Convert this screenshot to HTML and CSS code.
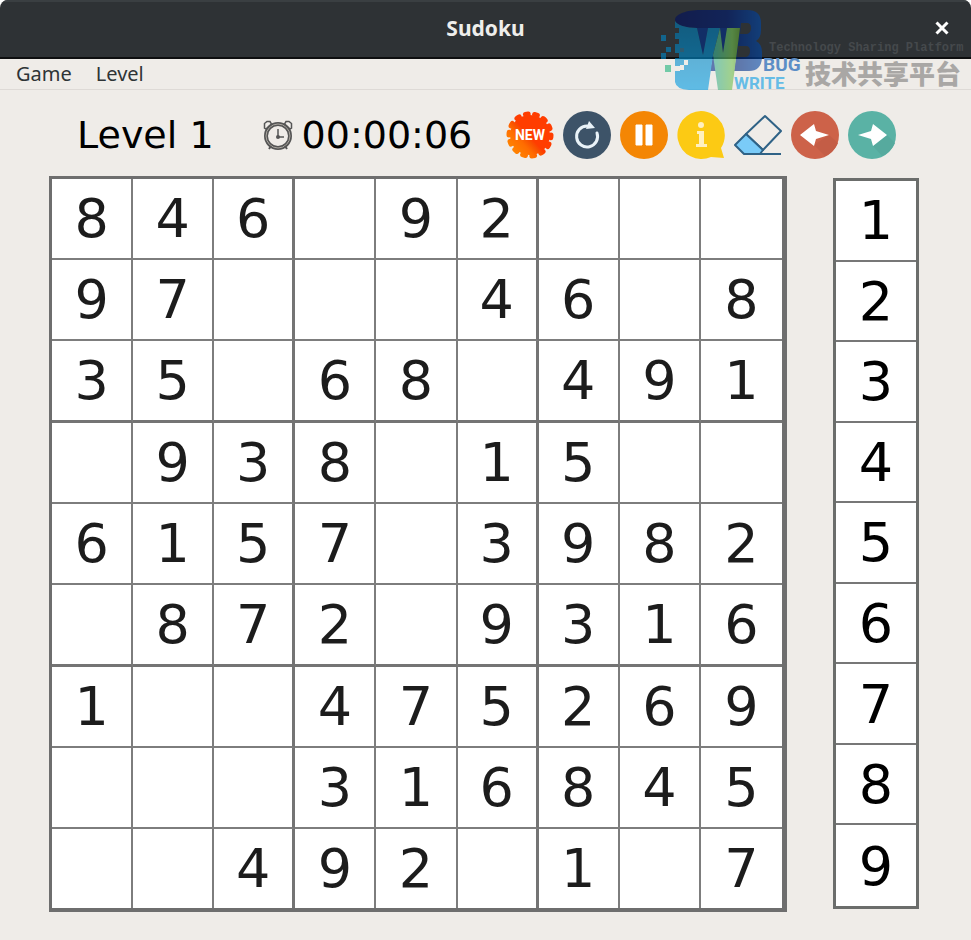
FILE: index.html
```html
<!DOCTYPE html>
<html lang="en">
<head>
    <meta charset="UTF-8">
    <meta name="viewport" content="width=device-width, initial-scale=1.0">
    <title>Sudoku</title>
    <link rel="stylesheet" href="styles.css">
</head>
<body>
    <div class="window">
        <header class="titlebar">
            <h1>Sudoku</h1>
            <button type="button" class="close-btn" aria-label="Close">
                <svg width="14" height="14" viewBox="0 0 14 14"><path d="M1.500 1.500L12.500 12.500M12.500 1.500L1.500 12.500" stroke="#fff" stroke-width="3"/></svg>
            </button>
        </header>

        <nav class="menubar">
            <button type="button">Game</button>
            <button type="button">Level</button>
        </nav>

        <div class="toolbar">
            <span class="level">Level 1</span>
            <svg class="clock" width="30" height="30" viewBox="0 0 30 30" fill="none" stroke="#555">
                <circle cx="15" cy="16" r="12" stroke-width="4"/>
                <circle cx="15" cy="16" r="12" stroke="#aaa69f" stroke-width="1"/>
                <path d="M1.500 8V3.500L4 1.500H7L8.500 4L3 9ZM28.500 8V3.500L26 1.500H23L21.500 4L27 9Z" stroke-width="1.500"/>
                <path d="M8 26L6 29M22 26L24 29" stroke-width="2"/>
                <path d="M15 9V17H21" stroke-width="1.500"/>
                <circle cx="15" cy="17" r="2" fill="#555" stroke="none"/>
            </svg>
            <time class="timer">00:00:06</time>

            <div class="tools">
                <button type="button" aria-label="New game">
                    <svg width="48" height="48" viewBox="0 0 48 48">
                        <defs>
                            <linearGradient id="badge" gradientUnits="userSpaceOnUse" x1="4" y1="42" x2="44" y2="6">
                                <stop offset="0" stop-color="#ff8a00"/>
                                <stop offset="0.300" stop-color="#ff6c00"/>
                                <stop offset="0.420" stop-color="#f95000"/>
                                <stop offset="0.480" stop-color="#ff3d00"/>
                            </linearGradient>
                        </defs>
                        <circle cx="24" cy="24" r="20" fill="url(#badge)"/>
                        <circle cx="24" cy="24" r="21" fill="none" stroke="url(#badge)" stroke-width="5" stroke-linecap="round" pathLength="140" stroke-dasharray="3 7"/>
                        <text class="badge-text" x="24" y="29" text-anchor="middle">NEW</text>
                    </svg>
                </button>
                <button type="button" aria-label="Restart">
                    <svg width="48" height="48" viewBox="0 0 48 48">
                        <circle cx="24" cy="24" r="24" fill="#3d5368"/>
                        <path d="M24 15A10.500 10.500 0 1 0 34 22" fill="none" stroke="#e9f2f8" stroke-width="3" stroke-linecap="round"/>
                        <path d="M26 10L32 17L23 18Z" fill="#e9f2f8"/>
                    </svg>
                </button>
                <button type="button" aria-label="Pause">
                    <svg width="48" height="48" viewBox="0 0 48 48">
                        <circle cx="24" cy="24" r="24" fill="#f48604"/>
                        <path d="M16 14H22V34H16ZM26 14H32V34H26Z" fill="#fff" stroke="#fff" stroke-width="1" stroke-linejoin="round"/>
                    </svg>
                </button>
                <button type="button" aria-label="Hint">
                    <svg width="48" height="48" viewBox="0 0 48 48">
                        <path d="M24 0A24 24 0 1 0 34 46L47 47L44 37A24 24 0 0 0 24 0Z" fill="#fcca14"/>
                        <circle cx="24" cy="14" r="3" fill="#fff0c0"/>
                        <path d="M20 20H27V33H30V36H19V33H22V23H20Z" fill="#fff0c0"/>
                    </svg>
                </button>
                <button type="button" aria-label="Erase">
                    <svg width="48" height="48" viewBox="0 0 48 48" stroke="#2f6286" stroke-width="2" stroke-linejoin="round">
                        <path d="M31 5L47 20L29 39L12 23Z" fill="#efece8"/>
                        <path d="M12 23L29 39L26 43H10L1 34Z" fill="#7acbf8"/>
                        <path d="M10 43H47" fill="none"/>
                    </svg>
                </button>
                <button type="button" aria-label="Undo">
                    <svg width="48" height="48" viewBox="0 0 48 48">
                        <circle cx="24" cy="24" r="24" fill="#cd6249"/>
                        <path d="M23 34L34 45A24 24 0 0 0 47 32L38 24Z" fill="#c45d46"/>
                        <path d="M9 24L23 13L25 20L38 24L25 28L23 35Z" fill="#fff"/>
                    </svg>
                </button>
                <button type="button" aria-label="Redo">
                    <svg width="48" height="48" viewBox="0 0 48 48">
                        <circle cx="24" cy="24" r="24" fill="#5ab2a5"/>
                        <path d="M25 35L34 45A24 24 0 0 0 47 32L39 24Z" fill="#56aa9e"/>
                        <path d="M39 24L25 13L23 20L10 24L23 28L25 35Z" fill="#fff"/>
                    </svg>
                </button>
            </div>
        </div>

        <main class="game">
            <table class="board" aria-label="Sudoku board">
                <tbody>
                    <tr><td>8</td><td>4</td><td>6</td><td></td><td>9</td><td>2</td><td></td><td></td><td></td></tr>
                    <tr><td>9</td><td>7</td><td></td><td></td><td></td><td>4</td><td>6</td><td></td><td>8</td></tr>
                    <tr><td>3</td><td>5</td><td></td><td>6</td><td>8</td><td></td><td>4</td><td>9</td><td>1</td></tr>
                    <tr><td></td><td>9</td><td>3</td><td>8</td><td></td><td>1</td><td>5</td><td></td><td></td></tr>
                    <tr><td>6</td><td>1</td><td>5</td><td>7</td><td></td><td>3</td><td>9</td><td>8</td><td>2</td></tr>
                    <tr><td></td><td>8</td><td>7</td><td>2</td><td></td><td>9</td><td>3</td><td>1</td><td>6</td></tr>
                    <tr><td>1</td><td></td><td></td><td>4</td><td>7</td><td>5</td><td>2</td><td>6</td><td>9</td></tr>
                    <tr><td></td><td></td><td></td><td>3</td><td>1</td><td>6</td><td>8</td><td>4</td><td>5</td></tr>
                    <tr><td></td><td></td><td>4</td><td>9</td><td>2</td><td></td><td>1</td><td></td><td>7</td></tr>
                </tbody>
            </table>

            <div class="numpad">
                <button type="button">1</button>
                <button type="button">2</button>
                <button type="button">3</button>
                <button type="button">4</button>
                <button type="button">5</button>
                <button type="button">6</button>
                <button type="button">7</button>
                <button type="button">8</button>
                <button type="button">9</button>
            </div>
        </main>

        <!-- logo laid over the top right corner -->
        <svg class="watermark" width="316" height="90" viewBox="0 0 316 90">
            <defs>
                <linearGradient id="blue" x1="0" y1="0" x2="1" y2="0">
                    <stop offset="0" stop-color="#000f5c"/>
                    <stop offset="0.600" stop-color="#001c70"/>
                    <stop offset="1" stop-color="#0048a8"/>
                </linearGradient>
                <linearGradient id="teal" x1="0" y1="0" x2="0" y2="1">
                    <stop offset="0" stop-color="#0078b0"/>
                    <stop offset="1" stop-color="#009ce4"/>
                </linearGradient>
                <linearGradient id="green" x1="0" y1="0" x2="1" y2="0">
                    <stop offset="0" stop-color="#38b09c"/>
                    <stop offset="0.700" stop-color="#70c050"/>
                    <stop offset="1" stop-color="#5c9e30"/>
                </linearGradient>
            </defs>
            <g opacity="0.600">
                <path fill="url(#blue)" fill-rule="evenodd" d="M20 15C20 9 32 5 45 5H92Q106 5 106 18V25Q106 33 101 36Q107 39 107 47V53Q106 66 94 66H79L85 23H72L68 48L65 23L58 50L60 66L56 66L58 50L65 23H53L48 50L42 23C30 23 20 20 20 15ZM86 18H92Q96 18 96 23T92 29H85ZM83 41H91Q95 41 95 46T91 52H82Z"/>
                <path fill="#002c88" d="M42 23H53L48 50ZM65 23H72L68 48ZM58 50L63 66H55Z"/>
                <path fill="url(#teal)" d="M20 16C22 20 31 23 42 23L48 50L53 23H65L58 50L53 85H34Q21 84 20 77V66H25V61H20V53H24V48H20V39H24V34H20V28H24V23H20Z"/>
                <path fill="url(#green)" d="M65 23L68 48L72 23H85L77 85H63L58 50Z"/>
                <path fill="#0088c8" d="M6 30H11V36H6ZM6 48H11V54H6ZM11 42H16V47H11Z"/>
                <path fill="#20b47c" d="M10 60H16V67H10Z"/>
            </g>
            <path fill="#efece8" d="M29 55H33V60H29ZM25 60H29V65H25Z"/>
            <path fill="#2e5a70" d="M25 43H29V47H25Z"/>
            <text class="mark-bug" x="108" y="66">BUG</text>
            <text class="mark-write" x="79" y="84">WRITE</text>
            <text class="mark-tagline" x="114" y="46">Technology Sharing Platform</text>
            <text class="mark-cjk" x="150" y="79">技术共享平台</text>
        </svg>
    </div>
</body>
</html>
```

FILE: styles.css
```css
body {
    margin: 0;
    background-color: #fff;
    font-family: "Noto Sans", sans-serif;
    color: #2e3436;
}
button {
    padding: 0;
    border: none;
    background: none;
    color: inherit;
    font: inherit;
    cursor: pointer;
}
svg {
    display: block;
}
.window {
    position: relative;
    min-height: 100vh;
    border-radius: 8px 8px 0 0;
    background-color: #efece8;
    overflow: hidden;
}

/* title bar and menus */
.titlebar {
    display: grid;
    grid-template-columns: 1fr auto 1fr;
    align-items: center;
    box-sizing: border-box;
    height: 59px;
    padding: 0 22px 3px;
    border-top: 2px solid #3a3f42;
    border-bottom: 2px solid #0d0e0f;
    background-color: #2e3235;
}
.titlebar h1 {
    grid-column: 2;
    margin: 0;
    color: #eeeeec;
    font-size: 21px;
    font-weight: 700;
    line-height: 28px;
}
.close-btn {
    justify-self: end;
}
.menubar {
    display: flex;
    gap: 24px;
    padding: 0 16px;
    border-bottom: 1px solid #dedad6;
    font-size: 20px;
    line-height: 30px;
}

/* level, timer and tool buttons */
.toolbar {
    display: flex;
    align-items: center;
    padding: 21px 52px 17px 77px;
    color: #000;
    font-family: "DejaVu Sans", sans-serif;
    font-size: 38px;
    line-height: 48px;
    white-space: nowrap;
}
.clock {
    margin: 0 9px 0 49px;
}
.tools {
    display: flex;
    gap: 9px;
    margin-left: 34px;
}
.badge-text {
    fill: #fff;
    font-family: Roboto, sans-serif;
    font-size: 14px;
    font-weight: 700;
}

/* board and number pad */
.game {
    display: flex;
    gap: 46px;
    padding: 0 52px 27px 49px;
    font-family: "DejaVu Sans", sans-serif;
    font-size: 54px;
    line-height: 1;
}
.board {
    flex: 1;
    width: 100%;
    table-layout: fixed;
    border: 3px solid #6e6e6e;
    border-right-width: 5px;
    border-bottom-width: 4px;
    border-spacing: 0;
    background-color: #fff;
    color: #1c1c1c;
}
.board td {
    height: 79px;
    padding: 0;
    border-right: 2px solid #7d7d7d;
    border-bottom: 2px solid #7d7d7d;
    text-align: center;
}
.board td:nth-child(3n) {
    border-right: 3px solid #747474;
}
.board tr:nth-child(3n) td {
    border-bottom: 3px solid #747474;
}
.board td:last-child {
    border-right: none;
}
.board tr:last-child td {
    border-bottom: none;
}
.numpad {
    display: grid;
    grid-auto-rows: 1fr;
    width: 80px;
    margin: 2px 0 3px;
    border: 3px solid #6b6d6b;
    background-color: #fff;
    color: #000;
}
.numpad button {
    padding-top: 2px;
    border-bottom: 2px solid #777;
}
.numpad button:last-child {
    border-bottom: none;
}

/* logo overlay */
.watermark {
    position: absolute;
    top: 5px;
    right: 0;
    pointer-events: none;
}
.mark-bug, .mark-write {
    font-family: Roboto, sans-serif;
    font-weight: 700;
}
.mark-bug {
    fill: #5c8ec6;
    font-size: 19px;
}
.mark-write {
    fill: #66bce6;
    font-size: 17px;
}
.mark-tagline {
    fill: #45494c;
    font-family: "Liberation Mono", monospace;
    font-size: 12px;
    font-weight: 700;
}
.mark-cjk {
    fill: #a9a7a5;
    font-family: "Noto Sans CJK SC", sans-serif;
    font-size: 26px;
    font-weight: 900;
}
```
